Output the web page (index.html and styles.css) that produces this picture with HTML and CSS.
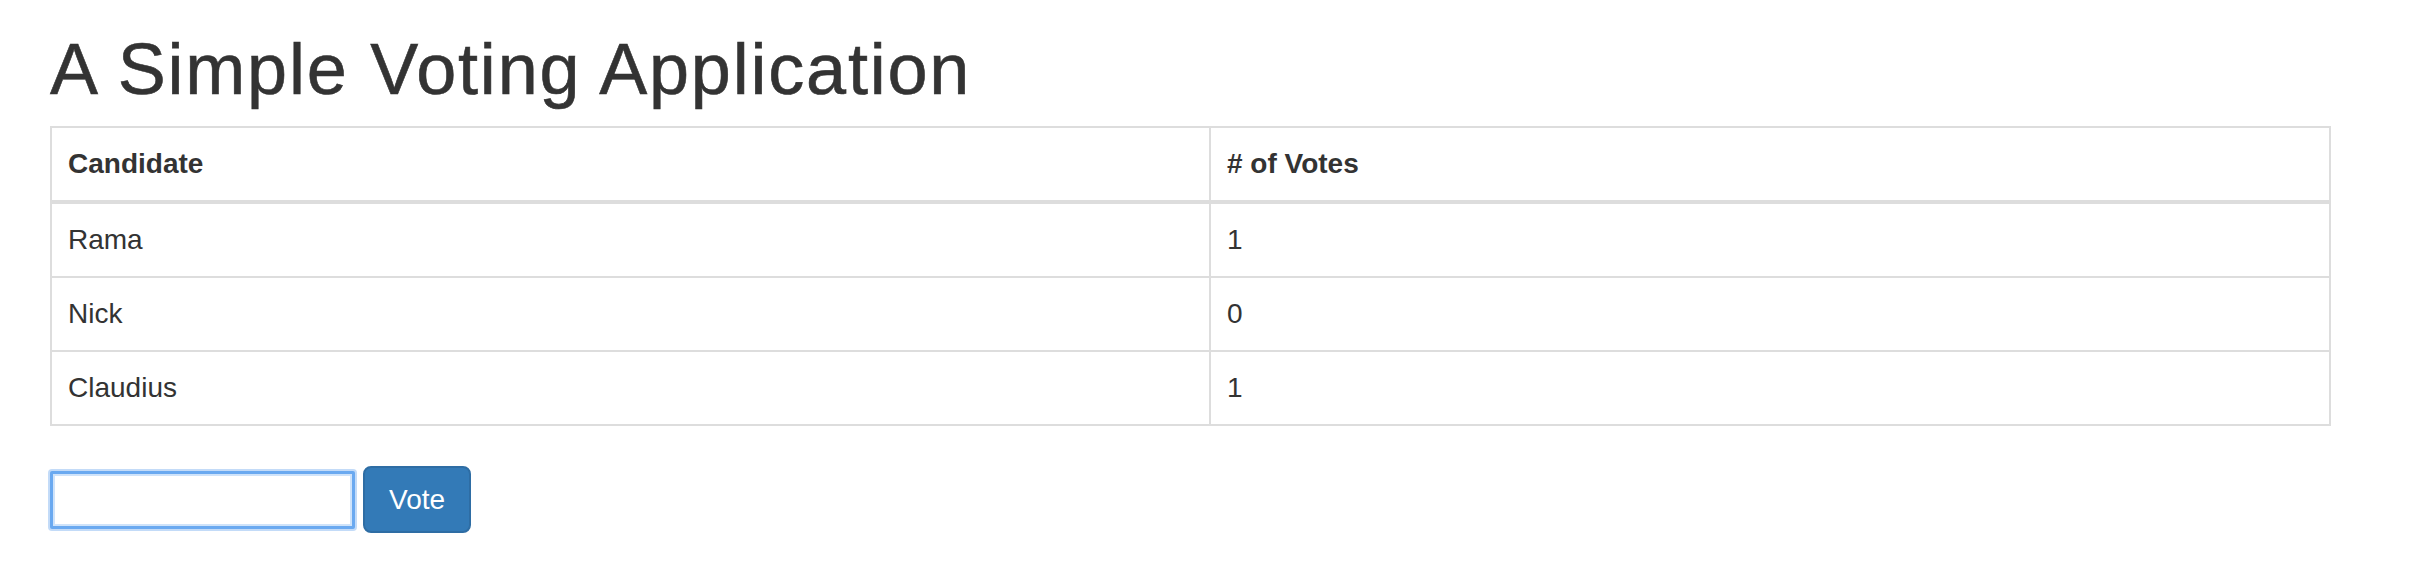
FILE: index.html
```html
<!DOCTYPE html>
<html lang="en">
<head>
<meta charset="utf-8">
<title>A Simple Voting Application</title>
<link rel="stylesheet" href="styles.css">
</head>
<body>
<div class="container">
  <h1 class="title">A Simple Voting Application</h1>
  <table class="votes">
    <colgroup>
      <col class="col-name">
      <col class="col-count">
    </colgroup>
    <thead>
      <tr><th>Candidate</th><th># of Votes</th></tr>
    </thead>
    <tbody>
      <tr><td>Rama</td><td>1</td></tr>
      <tr><td>Nick</td><td>0</td></tr>
      <tr><td>Claudius</td><td>1</td></tr>
    </tbody>
  </table>
  <div class="vote-form">
    <input class="candidate-input" type="text">
    <button class="btn-vote" type="button">Vote</button>
  </div>
</div>
</body>
</html>
```

FILE: styles.css
```css
html, body {
  margin: 0;
  padding: 0;
  background: #fff;
}

body {
  font-family: "Liberation Sans", Arial, Helvetica, sans-serif;
  font-size: 28px;
  line-height: 40px;
  color: #333;
}

.container {
  padding: 0 50px;
}

.title {
  margin: 31px 0 19px 0;
  font-size: 72px;
  line-height: 76px;
  font-weight: 500;
  letter-spacing: 1.8px;
  color: #333;
  -webkit-text-stroke: 0.6px #333;
}

.votes {
  width: 2281px;
  border-collapse: collapse;
  border: 2px solid #ddd;
  table-layout: fixed;
  margin-bottom: 40px;
}

.col-name {
  width: 1159px;
}

.votes th,
.votes td {
  border: 2px solid #ddd;
  padding: 16px;
  text-align: left;
  vertical-align: top;
  line-height: 40px;
}

.votes thead th {
  font-weight: bold;
  border-bottom-width: 4px;
}

.vote-form {
  display: flex;
  align-items: center;
  gap: 8px;
}

.candidate-input {
  box-sizing: border-box;
  width: 305px;
  height: 58px;
  margin: 0;
  padding: 0 6px;
  border: 3px solid #6aa9f0;
  border-radius: 2px;
  background: #fff;
  box-shadow: 0 0 0 2px #c3dbf8, inset 0 0 0 2px #cfe3fa;
  outline: none;
  font-family: "Liberation Sans", Arial, sans-serif;
  font-size: 26px;
}

.btn-vote {
  box-sizing: border-box;
  height: 67px;
  margin: 0;
  padding: 12px 24px;
  border: 2px solid #2e6da4;
  border-radius: 8px;
  background: #337ab7;
  color: #fff;
  font-family: "Liberation Sans", Arial, sans-serif;
  font-size: 28px;
  line-height: 40px;
  cursor: pointer;
}
```
